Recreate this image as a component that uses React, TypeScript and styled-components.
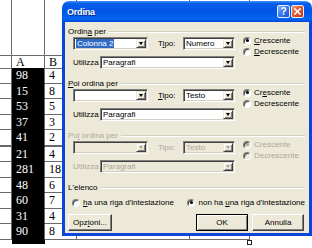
import React from "react";
import styled, { createGlobalStyle } from "styled-components";

const GlobalStyle = createGlobalStyle`
  html, body {
    margin: 0;
    padding: 0;
    background: #fff;
  }
  body {
    width: 312px;
    height: 248px;
    overflow: hidden;
  }
`;

const values: [string, string][] = [
  ["98", "4"],
  ["15", "8"],
  ["53", "5"],
  ["37", "3"],
  ["41", "2"],
  ["21", "4"],
  ["281", "18"],
  ["48", "6"],
  ["60", "7"],
  ["31", "4"],
  ["90", "8"],
];

const Stage = styled.div`
  position: relative;
  width: 312px;
  height: 248px;
  overflow: hidden;
`;

/* ---------- spreadsheet behind the dialog ---------- */

const Sheet = styled.div`
  display: flex;
  flex-direction: column;
  font-family: "Liberation Serif", "Times New Roman", serif;
`;

const SheetRow = styled.div<{ $h: number }>`
  display: grid;
  grid-template-columns: 12px 33px 32px 113px 60px 1fr;
  height: ${({ $h }) => $h}px;
`;

const Cell = styled.div<{ $fill?: boolean; $open?: boolean; $line?: number; $size?: number }>`
  box-sizing: border-box;
  display: flex;
  align-items: center;
  padding-left: 4px;
  white-space: nowrap;
  line-height: 1;
  font-size: ${({ $size }) => $size ?? 12}px;
  background: ${({ $fill }) => ($fill ? "#000" : "transparent")};
  color: ${({ $fill }) => ($fill ? "#fff" : "#000")};
  border-right: ${({ $open }) => ($open ? "none" : "1px solid #6a6a6a")};
  border-bottom: ${({ $open, $line, $fill }) =>
    $open ? "none" : `${$line ?? 1}px solid ${$fill ? "#000" : "#6a6a6a"}`};
`;

const FillHandle = styled.div`
  position: absolute;
  left: 247px;
  top: 240px;
  width: 5px;
  height: 5px;
  box-sizing: border-box;
  background: #fff;
  border: 1px solid #222;
`;

/* ---------- dialog ---------- */

const Window = styled.div`
  position: absolute;
  left: 62px;
  top: 1px;
  width: 250px;
  height: 235px;
  display: flex;
  flex-direction: column;
  border-radius: 7px 7px 0 0;
  overflow: hidden;
  font-family: "Liberation Sans", Arial, sans-serif;
  font-size: 8px;
  color: #000;
`;

const TitleBar = styled.div`
  flex: none;
  height: 21px;
  display: flex;
  align-items: center;
  padding: 0 8px 0 5px;
  background: linear-gradient(
    180deg,
    #3d95ff 0%,
    #0a5fe8 12%,
    #0055e5 45%,
    #0463f0 85%,
    #0058e8 94%,
    #0041cc 100%
  );
`;

const Title = styled.span`
  flex: 1;
  color: #fff;
  font-weight: bold;
  font-size: 9px;
  letter-spacing: -0.2px;
  text-shadow: 1px 1px #0a2a8a;
`;

const CaptionButton = styled.div<{ $close?: boolean }>`
  width: 13px;
  height: 13px;
  box-sizing: border-box;
  margin-left: 1px;
  border: 1px solid #e8eefc;
  border-radius: 2px;
  display: flex;
  align-items: center;
  justify-content: center;
  color: #fff;
  font-weight: bold;
  font-size: 10px;
  background: ${({ $close }) =>
    $close
      ? "linear-gradient(135deg, #f29a78 0%, #e2582c 45%, #c53a16 100%)"
      : "linear-gradient(135deg, #8cb6fa 0%, #3c7cf0 45%, #1d54d6 100%)"};
`;

const Frame = styled.div`
  flex: 1;
  display: flex;
  flex-direction: column;
  box-sizing: border-box;
  padding: 5px 4px 2px 3px;
  background: #ece9d8;
  border: 3px solid #0a45dc;
  border-top: none;
`;

const Group = styled.div`
  display: flex;
  flex-direction: column;
  margin-bottom: 10px;
`;

const Legend = styled.div<{ $off?: boolean }>`
  display: flex;
  align-items: center;
  height: 9px;
  white-space: nowrap;
  color: ${({ $off }) => ($off ? "#aca899" : "#000")};

  &::after {
    content: "";
    flex: 1;
    margin-left: 3px;
    border-top: 1px solid #d0d0bf;
    border-bottom: 1px solid #fff;
  }
`;

const GroupBody = styled.div`
  display: flex;
  align-items: flex-start;
  margin-top: 1px;
  padding-left: 5px;
`;

const Fields = styled.div`
  display: flex;
  flex-direction: column;
  gap: 6px;
`;

const FieldRow = styled.div`
  display: flex;
  align-items: center;
  height: 13px;
`;

const Label = styled.span<{ $w: number; $gap?: number; $off?: boolean }>`
  width: ${({ $w }) => $w}px;
  margin-left: ${({ $gap }) => $gap ?? 0}px;
  white-space: nowrap;
  color: ${({ $off }) => ($off ? "#aca899" : "#000")};
`;

const Combo = styled.div<{ $w: number; $off?: boolean }>`
  width: ${({ $w }) => $w}px;
  height: 13px;
  box-sizing: border-box;
  display: flex;
  padding: 1px;
  border: 1px solid;
  border-color: #808080 #fff #fff #808080;
  box-shadow: inset 1px 1px #404040, inset -1px -1px #d4d0c8;
  background: ${({ $off }) => ($off ? "#ece9d8" : "#fff")};
  color: ${({ $off }) => ($off ? "#aca899" : "#000")};
`;

const ComboText = styled.div`
  flex: 1;
  display: flex;
  align-items: center;
  padding-left: 1px;
  overflow: hidden;
  white-space: nowrap;
`;

const Highlight = styled.span`
  background: #316ac5;
  color: #fff;
  padding: 0 1px;
  line-height: 9px;
`;

const DropButton = styled.div<{ $off?: boolean }>`
  flex: none;
  width: 10px;
  box-sizing: border-box;
  display: flex;
  align-items: center;
  justify-content: center;
  background: #ece9d8;
  border: 1px solid;
  border-color: #ece9d8 #404040 #404040 #ece9d8;
  box-shadow: inset 1px 1px #fff, inset -1px -1px #808080;

  &::before {
    content: "";
    border-left: 2.5px solid transparent;
    border-right: 2.5px solid transparent;
    border-top: 3px solid ${({ $off }) => ($off ? "#aca899" : "#000")};
  }
`;

const Radios = styled.div`
  display: flex;
  flex-direction: column;
  margin: -2px 0 0 8px;
`;

const RadioItem = styled.div<{ $w?: number; $off?: boolean }>`
  display: flex;
  align-items: center;
  gap: 3px;
  height: 11px;
  width: ${({ $w }) => ($w ? `${$w}px` : "auto")};
  white-space: nowrap;
  color: ${({ $off }) => ($off ? "#aca899" : "#000")};
`;

const RadioDot = styled.span<{ $on?: boolean; $off?: boolean }>`
  flex: none;
  width: 8px;
  height: 8px;
  box-sizing: border-box;
  border-radius: 50%;
  border: 1px solid;
  border-color: #808080 #fff #fff #808080;
  box-shadow: inset 1px 1px #404040;
  background: ${({ $off }) => ($off ? "#ece9d8" : "#fff")};
  display: flex;
  align-items: center;
  justify-content: center;

  &::after {
    content: "";
    width: 3px;
    height: 3px;
    border-radius: 50%;
    background: ${({ $on, $off }) => (!$on ? "transparent" : $off ? "#aca899" : "#000")};
  }
`;

const RadioRow = styled.div`
  display: flex;
  margin-top: 5px;
  padding-left: 4px;
`;

const ButtonBar = styled.div`
  display: flex;
  justify-content: space-between;
  margin-top: 6px;
  padding-right: 1px;
`;

const ButtonGroup = styled.div`
  display: flex;
  gap: 4px;
`;

const PushButton = styled.button<{ $w: number; $default?: boolean }>`
  width: ${({ $w }) => $w}px;
  height: 17px;
  box-sizing: border-box;
  padding: 0;
  margin: 0;
  font: inherit;
  color: #000;
  background: #ece9d8;
  border: 1px solid;
  border-color: ${({ $default }) => ($default ? "#000" : "#fff #404040 #404040 #fff")};
  box-shadow: ${({ $default }) =>
    $default ? "inset 1px 1px #fff, inset -1px -1px #808080" : "inset -1px -1px #808080"};
`;

const U = styled.span`
  text-decoration: underline;
  text-underline-offset: 1px;
`;

interface SortGroupProps {
  legend: React.ReactNode;
  first?: React.ReactNode;
  tipo: string;
  tipoLabel: React.ReactNode;
  up: React.ReactNode;
  down: React.ReactNode;
  off?: boolean;
}

const SortGroup: React.FC<SortGroupProps> = ({ legend, first, tipo, tipoLabel, up, down, off }) => (
  <Group>
    <Legend $off={off}>
      <span>{legend}</span>
    </Legend>
    <GroupBody>
      <Fields>
        <FieldRow>
          <Combo $w={75} $off={off}>
            <ComboText>{first}</ComboText>
            <DropButton $off={off} />
          </Combo>
          <Label $w={25} $gap={10} $off={off}>
            {tipoLabel}
          </Label>
          <Combo $w={52} $off={off}>
            <ComboText>{tipo}</ComboText>
            <DropButton $off={off} />
          </Combo>
        </FieldRow>
        <FieldRow>
          <Label $w={27} $off={off}>
            Utilizza
          </Label>
          <Combo $w={135} $off={off}>
            <ComboText>Paragrafi</ComboText>
            <DropButton $off={off} />
          </Combo>
        </FieldRow>
      </Fields>
      <Radios>
        <RadioItem $off={off}>
          <RadioDot $on $off={off} />
          <span>{up}</span>
        </RadioItem>
        <RadioItem $off={off}>
          <RadioDot $off={off} />
          <span>{down}</span>
        </RadioItem>
      </Radios>
    </GroupBody>
  </Group>
);

const App: React.FC = () => {
  return (
    <Stage>
      <GlobalStyle />
      <Sheet>
        <SheetRow $h={56}>
          <Cell />
          <Cell />
          <Cell />
          <Cell />
          <Cell />
          <Cell $open />
        </SheetRow>
        <SheetRow $h={12}>
          <Cell />
          <Cell $size={12}>A</Cell>
          <Cell $size={12}>B</Cell>
          <Cell />
          <Cell />
          <Cell $open />
        </SheetRow>
        {values.map(([a, b], i) => {
          const line = i === 4 ? 2 : 1;
          return (
            <SheetRow key={i} $h={i === 4 ? 16.5 : 15.5}>
              <Cell $line={line} />
              <Cell $fill $line={line}>
                {a}
              </Cell>
              <Cell $line={line}>{b}</Cell>
              <Cell $line={line} />
              <Cell $line={line} />
              <Cell $open />
            </SheetRow>
          );
        })}
        <SheetRow $h={4}>
          <Cell $open />
          <Cell $open $fill />
        </SheetRow>
      </Sheet>
      <FillHandle />

      <Window>
        <TitleBar>
          <Title>Ordina</Title>
          <CaptionButton>?</CaptionButton>
          <CaptionButton $close>
            <svg width="7" height="7" viewBox="0 0 7 7">
              <path d="M1 1 L6 6 M6 1 L1 6" stroke="#fff" strokeWidth="1.6" strokeLinecap="square" />
            </svg>
          </CaptionButton>
        </TitleBar>
        <Frame>
          <SortGroup
            legend={
              <>
                Ordin<U>a</U> per
              </>
            }
            first={<Highlight>Colonna 2</Highlight>}
            tipoLabel={
              <>
                T<U>i</U>po:
              </>
            }
            tipo="Numero"
            up={
              <>
                <U>C</U>rescente
              </>
            }
            down={
              <>
                <U>D</U>ecrescente
              </>
            }
          />
          <SortGroup
            legend={
              <>
                <U>P</U>oi ordina per
              </>
            }
            tipoLabel={
              <>
                <U>T</U>ipo:
              </>
            }
            tipo="Testo"
            up={
              <>
                Cr<U>e</U>scente
              </>
            }
            down="Decrescente"
          />
          <SortGroup
            off
            legend={
              <>
                Po<U>i</U> ordina per
              </>
            }
            tipoLabel="Tipo:"
            tipo="Testo"
            up="Crescente"
            down="Decrescente"
          />
          <Legend>
            <span>L'elenco</span>
          </Legend>
          <RadioRow>
            <RadioItem $w={116}>
              <RadioDot />
              <span>
                <U>h</U>a una riga d'intestazione
              </span>
            </RadioItem>
            <RadioItem>
              <RadioDot $on />
              <span>
                non ha <U>u</U>na riga d'intestazione
              </span>
            </RadioItem>
          </RadioRow>
          <ButtonBar>
            <PushButton $w={44}>
              Opz<U>i</U>oni...
            </PushButton>
            <ButtonGroup>
              <PushButton $w={52} $default>
                OK
              </PushButton>
              <PushButton $w={52}>Annulla</PushButton>
            </ButtonGroup>
          </ButtonBar>
        </Frame>
      </Window>
    </Stage>
  );
};

export default App;
